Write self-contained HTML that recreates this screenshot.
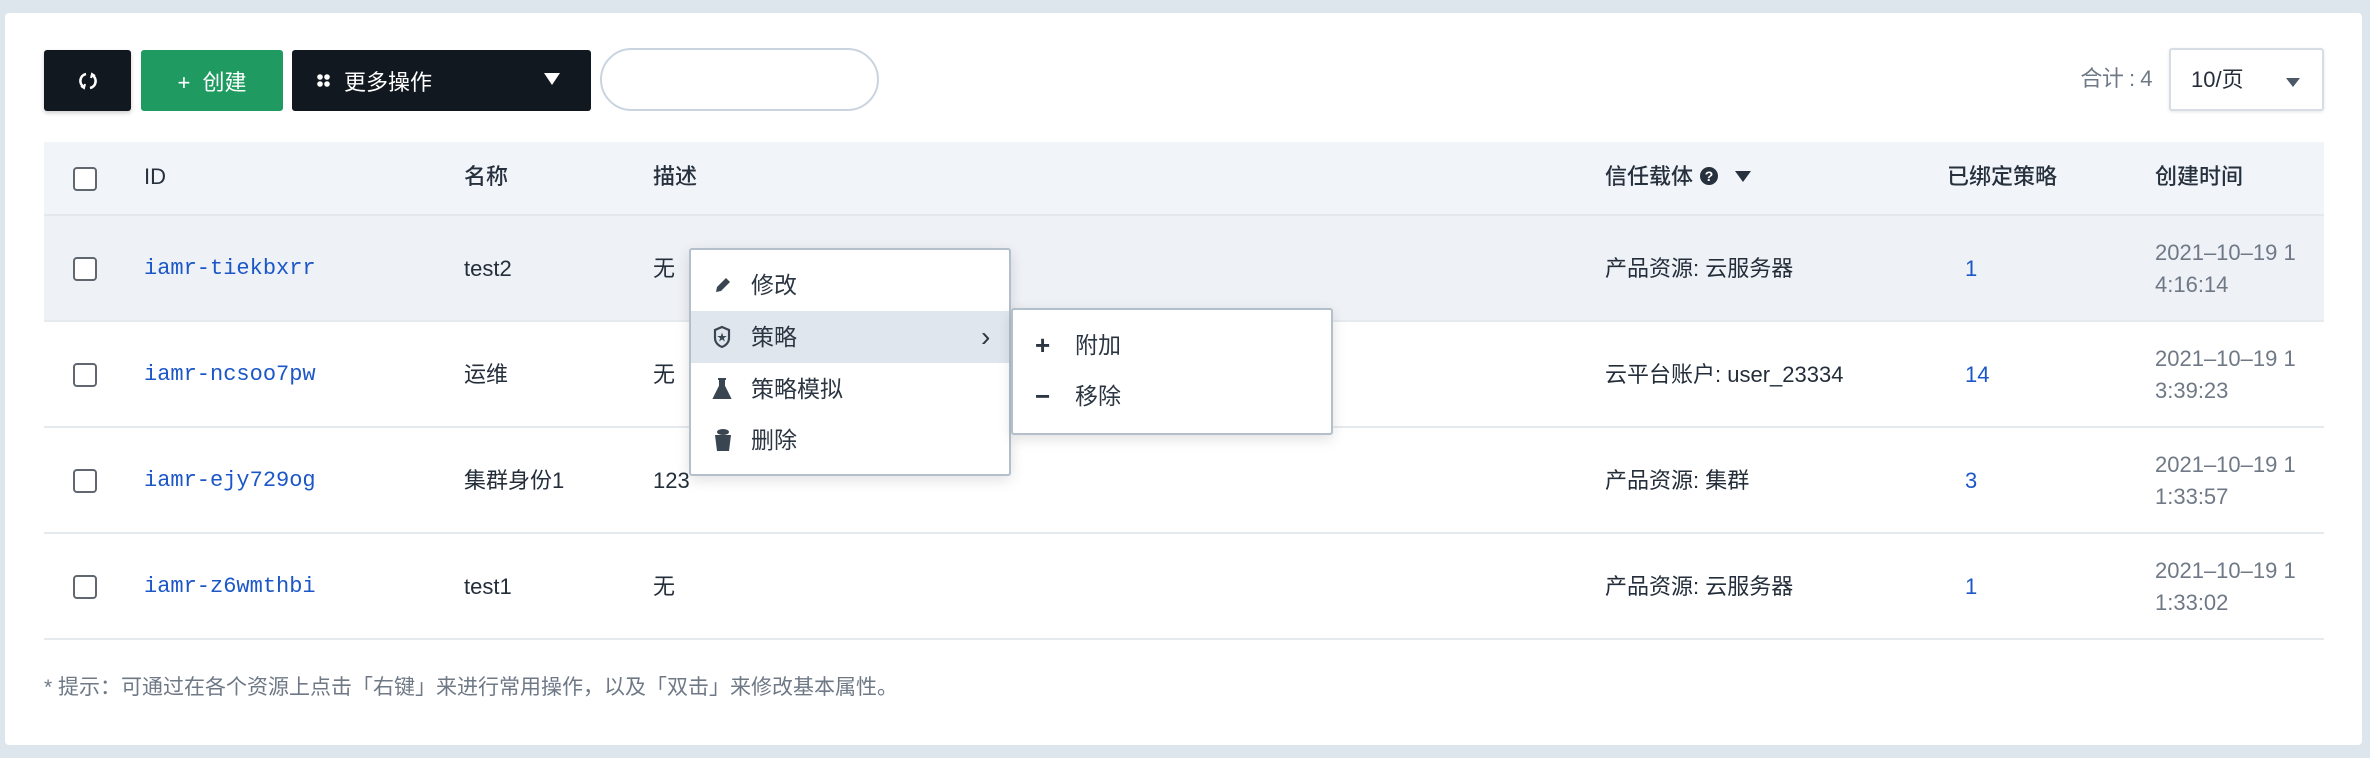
<!DOCTYPE html>
<html><head><meta charset="utf-8"><style>
*{box-sizing:border-box;margin:0;padding:0}
body{width:2370px;height:758px;background:#dde5ed;font-family:"Liberation Sans","Noto Sans CJK SC",sans-serif;color:#242e3a;position:relative;overflow:hidden}
.card{position:absolute;left:5px;top:13px;width:2357px;height:732px;background:#fff;border-radius:4px}
.a{position:absolute}
.btn{position:absolute;top:50px;height:61px;border-radius:3px;color:#fff;font-size:22px;display:flex;align-items:center}
.th{position:absolute;left:44px;top:142px;width:2280px;height:74px;background:#f1f4f8;border-bottom:2px solid #e2e8ee}
.row{position:absolute;left:44px;width:2280px;height:106px;border-bottom:2px solid #e5eaef}
.cb{position:absolute;left:29px;width:24px;height:24px;border:2px solid #606770;border-radius:4px;background:#fff}
.t{position:absolute;font-size:22px;white-space:nowrap;line-height:32px}
.hd{font-weight:500;color:#27313d}
.id{font-family:"Liberation Mono",monospace;color:#1c57c8;font-size:22px}
.lk{color:#1c57c8}
.tm{color:#6f7986;line-height:32px}
.menu{position:absolute;background:#fff;border:2px solid #b3bfca;border-radius:3px;box-shadow:0 4px 14px rgba(0,0,0,.12)}
.mi{position:absolute;left:0;width:100%;height:52px;font-size:23px;color:#2c3642}
.mi span{position:absolute;top:0;line-height:52px}
</style></head><body>
<div class="card"></div>
<div class="btn" style="left:44px;width:87px;background:#121820;justify-content:center;box-shadow:0 2px 4px rgba(0,0,0,.2)">
<svg width="22" height="22" viewBox="0 0 22 22" fill="none" stroke="#fff" stroke-width="2.6"><path d="M9 4A7 7 0 0 0 7 17"/><path d="M13 18A7 7 0 0 0 15 5"/><path d="M4 16l3 2 1-4" stroke-width="2"/><path d="M18 6l-3-2-1 4" stroke-width="2"/></svg></div>
<div class="btn" style="left:141px;width:142px;background:#1f9b62;justify-content:center">+&nbsp; 创建</div>
<div class="btn" style="left:292px;width:299px;background:#121820">
<svg style="position:absolute;left:25px;top:24px" width="13" height="13"><circle cx="3" cy="3" r="2.8" fill="#fff"/><circle cx="10" cy="3" r="2.8" fill="#fff"/><circle cx="3" cy="10" r="2.8" fill="#fff"/><circle cx="10" cy="10" r="2.8" fill="#fff"/></svg>
<span style="position:absolute;left:52px">更多操作</span>
<span style="position:absolute;left:252px;top:23px;width:0;height:0;border-left:8px solid transparent;border-right:8px solid transparent;border-top:12px solid #fff"></span></div>
<div class="a" style="left:600px;top:48px;width:279px;height:63px;border:2px solid #c9d4e0;border-radius:32px;background:#fff"></div>
<div class="t" style="right:218px;top:63px;color:#6f7986;letter-spacing:-0.5px">合计 : 4</div>
<div class="a" style="left:2169px;top:48px;width:155px;height:63px;border:2px solid #d6dde5;border-radius:3px;background:#fff;box-shadow:0 1px 3px rgba(0,0,0,.1)">
<span class="t" style="left:20px;top:14px">10/页</span>
<span class="a" style="left:115px;top:28px;border-left:7px solid transparent;border-right:7px solid transparent;border-top:9px solid #4d5866"></span></div>

<div class="th">
<div class="cb" style="top:25px"></div>
<div class="t hd" style="left:100px;top:19px">ID</div>
<div class="t hd" style="left:420px;top:19px">名称</div>
<div class="t hd" style="left:609px;top:19px">描述</div>
<div class="t hd" style="left:1561px;top:19px">信任载体 <svg width="20" height="20" style="vertical-align:-2px"><circle cx="10" cy="10" r="9" fill="#27313d"/><text x="10" y="15" font-size="14" font-weight="bold" fill="#fff" text-anchor="middle" font-family="Liberation Sans">?</text></svg> <span style="display:inline-block;margin-left:10px;border-left:8px solid transparent;border-right:8px solid transparent;border-top:11px solid #27313d;vertical-align:2px"></span></div>
<div class="t hd" style="left:1903px;top:19px">已绑定策略</div>
<div class="t hd" style="left:2111px;top:19px">创建时间</div>
</div>

<div class="row" style="top:216px;background:#eef1f6">
<div class="cb" style="top:41px"></div>
<div class="t id" style="left:100px;top:37px">iamr-tiekbxrr</div>
<div class="t" style="left:420px;top:37px">test2</div>
<div class="t" style="left:609px;top:37px">无</div>
<div class="t" style="left:1561px;top:37px">产品资源: 云服务器</div>
<div class="t lk" style="left:1921px;top:37px">1</div>
<div class="t tm" style="left:2111px;top:21px">2021–10–19 1<br>4:16:14</div>
</div>
<div class="row" style="top:322px">
<div class="cb" style="top:41px"></div>
<div class="t id" style="left:100px;top:37px">iamr-ncsoo7pw</div>
<div class="t" style="left:420px;top:37px">运维</div>
<div class="t" style="left:609px;top:37px">无</div>
<div class="t" style="left:1561px;top:37px">云平台账户: user_23334</div>
<div class="t lk" style="left:1921px;top:37px">14</div>
<div class="t tm" style="left:2111px;top:21px">2021–10–19 1<br>3:39:23</div>
</div>
<div class="row" style="top:428px">
<div class="cb" style="top:41px"></div>
<div class="t id" style="left:100px;top:37px">iamr-ejy729og</div>
<div class="t" style="left:420px;top:37px">集群身份1</div>
<div class="t" style="left:609px;top:37px">123</div>
<div class="t" style="left:1561px;top:37px">产品资源: 集群</div>
<div class="t lk" style="left:1921px;top:37px">3</div>
<div class="t tm" style="left:2111px;top:21px">2021–10–19 1<br>1:33:57</div>
</div>
<div class="row" style="top:534px">
<div class="cb" style="top:41px"></div>
<div class="t id" style="left:100px;top:37px">iamr-z6wmthbi</div>
<div class="t" style="left:420px;top:37px">test1</div>
<div class="t" style="left:609px;top:37px">无</div>
<div class="t" style="left:1561px;top:37px">产品资源: 云服务器</div>
<div class="t lk" style="left:1921px;top:37px">1</div>
<div class="t tm" style="left:2111px;top:21px">2021–10–19 1<br>1:33:02</div>
</div>

<div class="t" style="left:44px;top:672px;font-size:21px;color:#6f7986">* 提示：可通过在各个资源上点击「右键」来进行常用操作，以及「双击」来修改基本属性。</div>

<div class="menu" style="left:689px;top:248px;width:322px;height:228px">
<div class="mi" style="top:9px"><svg class="a" style="left:22px;top:16px" width="20" height="20"><path d="M3 17l1-5 9-9 4 4-9 9z" fill="#3a4552"/></svg><span style="left:60px">修改</span></div>
<div class="mi" style="top:61px;background:#dfe6ee"><svg class="a" style="left:22px;top:14px" width="18" height="24"><path d="M9 2l7 3v8c0 5-4 8-7 9-3-1-7-4-7-9V5z" fill="none" stroke="#3a4552" stroke-width="2.2"/><text x="9" y="16" font-size="10" text-anchor="middle" fill="#3a4552">★</text></svg><span style="left:60px">策略</span><span style="left:290px;font-size:28px">›</span></div>
<div class="mi" style="top:113px"><svg class="a" style="left:20px;top:14px" width="22" height="24"><path d="M7 2h8M9 2v7L3 21h16L13 9V2" fill="#3a4552" stroke="#3a4552" stroke-width="2"/></svg><span style="left:60px">策略模拟</span></div>
<div class="mi" style="top:164px"><svg class="a" style="left:22px;top:13px" width="20" height="26"><ellipse cx="10" cy="5" rx="6" ry="3" fill="#3a4552"/><path d="M2 8h16l-2 16H4z" fill="#3a4552"/></svg><span style="left:60px">删除</span></div>
</div>
<div class="menu" style="left:1011px;top:308px;width:322px;height:127px">
<div class="mi" style="top:9px"><span style="left:22px;font-size:26px;font-weight:bold">+</span><span style="left:62px">附加</span></div>
<div class="mi" style="top:60px"><span style="left:22px;font-size:26px;font-weight:bold">−</span><span style="left:62px">移除</span></div>
</div>
</body></html>
